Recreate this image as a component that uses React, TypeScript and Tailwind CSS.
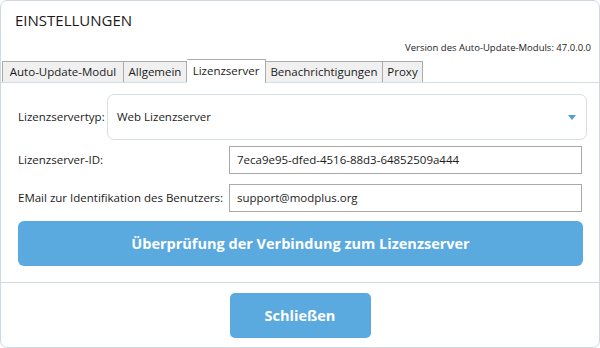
import React from "react";

const tabs = [
  { label: "Auto-Update-Modul", w: "w-[122px]", first: true },
  { label: "Allgemein", w: "w-[63px]" },
  { label: "Lizenzserver", w: "w-[79px]", active: true },
  { label: "Benachrichtigungen", w: "w-[117px]" },
  { label: "Proxy", w: "w-[40px]" },
];

const Tab = ({ label, w, first, active }: { label: string; w: string; first?: boolean; active?: boolean }) => (
  <div
    className={
      active
        ? `${w} h-[24px] -mb-px bg-white border-t border-r border-[#acacac] flex items-center justify-center pb-[2px]`
        : `${w} h-[21px] bg-[#f0f0f0] border-t border-r border-[#acacac] flex items-center justify-center ${first ? "border-l" : ""}`
    }
  >
    {label}
  </div>
);

export default function App() {
  return (
    <div className="w-[600px] h-[348px] bg-white text-[11.5px] text-[#1b1b1b]" style={{ fontFamily: '"Segoe UI", "Open Sans", sans-serif' }}>
      <div className="h-full border border-[#cfd8e0] rounded-[7px] flex flex-col overflow-hidden">
        <div className="pl-[14px] pt-[9px] h-[20px] box-content text-[15px] leading-[20px]">EINSTELLUNGEN</div>
        <div className="mt-[11px] pr-[8px] text-right text-[9.5px] leading-[14px]">Version des Auto-Update-Moduls: 47.0.0.0</div>
        <div className="mt-[4px] h-[24px] pl-[1px] flex items-end border-b border-[#d5dde5]">
          {tabs.map((t) => (
            <Tab key={t.label} {...t} />
          ))}
        </div>

        <div className="flex-1 pl-[17px] pt-[11px]">
          <div className="flex items-center">
            <div className="w-[89px]">Lizenzservertyp:</div>
            <div className="w-[480px] h-[46px] border border-[#d5dde5] rounded-[7px] flex items-center justify-between pl-[9px] pr-[10px]">
              <span>Web Lizenzserver</span>
              <svg width="8" height="5" viewBox="0 0 8 5">
                <path d="M0 0 L8 0 L4 5 Z" fill="#4fa0dd" />
              </svg>
            </div>
          </div>
          <div className="mt-[6px] flex items-center">
            <div className="w-[211px]">Lizenzserver-ID:</div>
            <div className="w-[353px] h-[28px] border border-[#a9a9a9] flex items-center pl-[7px]">7eca9e95-dfed-4516-88d3-64852509a444</div>
          </div>
          <div className="mt-[10px] flex items-center">
            <div className="w-[211px] whitespace-nowrap">EMail zur Identifikation des Benutzers:</div>
            <div className="w-[353px] h-[28px] border border-[#a9a9a9] flex items-center pl-[7px]">support@modplus.org</div>
          </div>
          <button className="mt-[9px] w-[565px] h-[45px] rounded-[6px] bg-[#5aaae0] text-white font-bold text-[14.5px]">
            Überprüfung der Verbindung zum Lizenzserver
          </button>
        </div>

        <div className="h-[65px] border-t border-[#cfd8e0] flex justify-center pt-[10px]">
          <button className="w-[141px] h-[45px] rounded-[5px] bg-[#5aaae0] text-white font-bold text-[14.5px]">Schließen</button>
        </div>
      </div>
    </div>
  );
}
